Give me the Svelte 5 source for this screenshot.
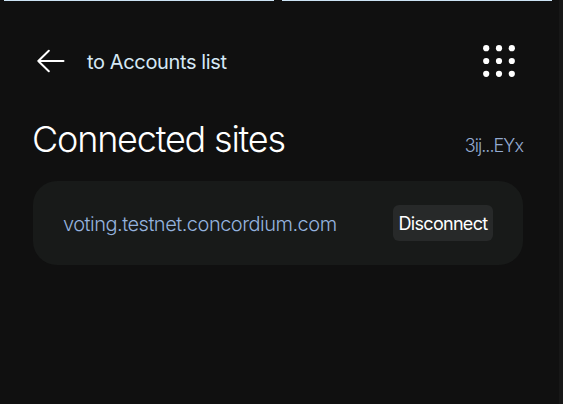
<script>
  const account = '3ij...EYx';
  const sites = ['voting.testnet.concordium.com'];
  const dots = [5.2, 18, 30.8];
</script>

<div class="page">
  <div class="tabs"><span></span><span></span></div>
  <header>
    <button class="back" aria-label="Back">
      <svg width="28" height="24" viewBox="0 0 28 24" fill="none" stroke="#fff" stroke-width="2" stroke-linecap="round" stroke-linejoin="round">
        <path d="M26.5 12H1.3M11.8 1.8L1.3 12L11.8 22.2" />
      </svg>
    </button>
    <span class="label">to Accounts list</span>
    <button class="menu" aria-label="Menu">
      <svg width="36" height="36" viewBox="0 0 36 36" fill="#fff">
        {#each dots as y}
          {#each dots as x}
            <circle cx={x} cy={y} r="3.1" />
          {/each}
        {/each}
      </svg>
    </button>
  </header>
  <div class="heading">
    <h1>Connected sites</h1>
    <span class="account">{account}</span>
  </div>
  {#each sites as site}
    <section class="card">
      <span class="site">{site}</span>
      <button class="disconnect"><span>Disconnect</span></button>
    </section>
  {/each}
</div>

<style>
  :global(body) {
    margin: 0;
    background: #101010;
  }
  .page {
    box-sizing: border-box;
    height: 404px;
    overflow: hidden;
    background: #101010;
    border-right: 4px solid #171717;
    font-family: Inter, "Liberation Sans", sans-serif;
    color: #fff;
    white-space: nowrap;
  }
  button {
    border: 0;
    padding: 0;
    background: none;
    color: inherit;
    font: inherit;
  }
  svg {
    display: block;
  }
  .tabs {
    display: flex;
    gap: 8px;
    height: 1px;
    padding: 0 7px 0 4px;
  }
  .tabs span {
    flex: 1;
    background: #cce3f4;
  }
  header {
    display: flex;
    align-items: center;
    height: 36px;
    margin-top: 42px;
    padding: 0 42px 0 37px;
  }
  .label {
    margin-left: 22px;
    font-size: 20px;
    line-height: 36px;
    letter-spacing: -0.37px;
    color: #d5e8f5;
    padding-top: 2px;
  }
  .menu {
    margin-left: auto;
  }
  .heading {
    display: flex;
    align-items: baseline;
    justify-content: space-between;
    height: 44px;
    margin-top: 38px;
    padding: 0 36px 0 32px;
  }
  h1 {
    margin: 0;
    font-size: 36px;
    line-height: 44px;
    font-weight: 350;
    letter-spacing: -1.2px;
  }
  .account {
    font-size: 18px;
    font-weight: 300;
    letter-spacing: -0.95px;
    color: #94abd0;
  }
  .card {
    box-sizing: border-box;
    display: flex;
    align-items: center;
    justify-content: space-between;
    height: 84px;
    margin: 20px 36px 0 33px;
    padding: 0 30px;
    border-radius: 24px;
    background: #181a19;
  }
  .site {
    padding-top: 2px;
    font-size: 20px;
    font-weight: 300;
    letter-spacing: -0.5px;
    color: #94b2de;
  }
  .disconnect {
    display: flex;
    align-items: center;
    justify-content: center;
    width: 100px;
    height: 36px;
    border-radius: 6px;
    background: #272929;
    font-size: 18px;
    letter-spacing: -0.7px;
  }
</style>
